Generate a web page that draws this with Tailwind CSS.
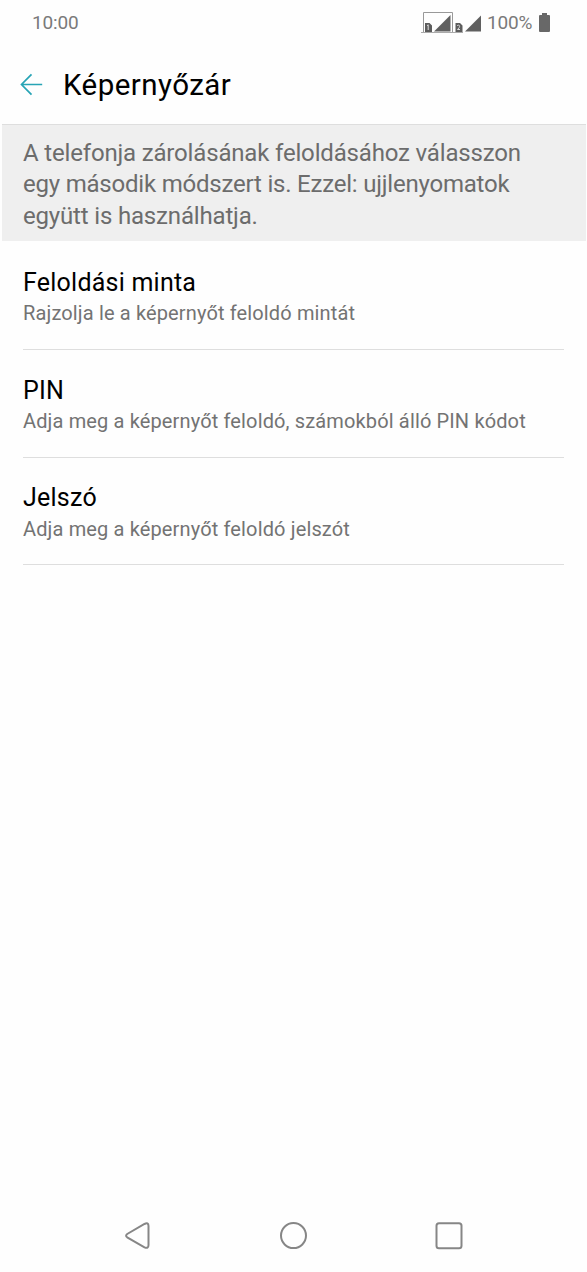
<!DOCTYPE html>
<html lang="hu">
<head>
<meta charset="utf-8">
<title>Képernyőzár</title>
<script src="https://cdn.jsdelivr.net/npm/@tailwindcss/browser@4"></script>
</head>
<body class="bg-[#fefefe] font-['Roboto',sans-serif] text-[#737373]">
<div class="flex h-[1272px] w-[587px] flex-col overflow-hidden">
  <header class="flex h-[45px] shrink-0 items-center justify-between pl-8 pr-[37px] text-[19px] leading-[22px] tracking-[-0.150px] text-[#7a7a7a]">
    <span class="whitespace-nowrap">10:00</span>
    <div class="flex items-center">
      <svg class="h-[24px] w-[60px]" viewBox="0 0 60 24" fill="none">
        <path d="M2.500 21.500V1.500H31.500V21.500" stroke="#999"/>
        <path d="M0 21.500H42" stroke="#aaa"/>
        <path d="M4 21V12H8.500L11 14.500V21ZM34.500 21V12H39L41.500 14.500V21Z" fill="#5c5c5c"/>
        <path d="M13 20.500L29.500 4V20.500ZM44 20.500L60.500 4V20.500Z" fill="#606060"/>
        <path d="M6 14.800L7.200 13.800V19M36 14.800C38 13.300 39.500 14.800 38 16.800L36.500 18.500H39" stroke="#ddd" stroke-width="1"/>
      </svg>
      <span class="ml-[6px] w-[45px] whitespace-nowrap">100%</span>
      <svg class="ml-[7px] h-[19px] w-[11px]" viewBox="0 0 11 19"><path d="M3 0h5v2h2q1 0 1 1v15q0 1-1 1H1q-1 0-1-1V3q0-1 1-1h2z" fill="#686868"/></svg>
    </div>
  </header>
  <div class="flex h-[79px] shrink-0 items-center pl-[20px]">
    <svg class="h-[24px] w-[23px]" viewBox="0 0 23 24" fill="none" stroke="#27a4b5" stroke-width="1.700"><path d="M22.200 11.500H1.500M11.500 1.300L1.500 11.500L11.500 21.700"/></svg>
    <h1 class="ml-5 whitespace-nowrap text-[29.500px] leading-[34px] tracking-[0.450px] text-black">Képernyőzár</h1>
  </div>
  <section class="ml-[2px] mr-px h-[117px] shrink-0 border-t border-[#dedede] bg-[#efefef] pl-[21px] pt-[13px] text-[24px] leading-[31.300px] tracking-[-0.170px] text-[#6c6c6c]">
    <p class="whitespace-nowrap">A telefonja zárolásának feloldásához válasszon<br><span class="tracking-[-0.210px]">egy második módszert is. Ezzel: ujjlenyomatok</span><br>együtt is használhatja.</p>
  </section>
  <main class="mx-[23px] flex-1">
    <div class="h-[109px] border-b border-[#dedede] pt-[27px]">
      <h2 class="whitespace-nowrap text-[25px] leading-[30px] tracking-[0.230px] text-black">Feloldási minta</h2>
      <p class="mt-[3px] whitespace-nowrap text-[20px] leading-[24px] tracking-[0.140px]">Rajzolja le a képernyőt feloldó mintát</p>
    </div>
    <div class="h-[108px] border-b border-[#dedede] pt-[26px]">
      <h2 class="whitespace-nowrap text-[25px] leading-[30px] tracking-[0.230px] text-black">PIN</h2>
      <p class="mt-[3px] whitespace-nowrap text-[20px] leading-[24px] tracking-[0.140px]">Adja meg a képernyőt feloldó, számokból álló PIN kódot</p>
    </div>
    <div class="h-[107px] border-b border-[#dedede] pt-[25px]">
      <h2 class="whitespace-nowrap text-[25px] leading-[30px] tracking-[0.230px] text-black">Jelszó</h2>
      <p class="mt-[4px] whitespace-nowrap text-[20px] leading-[24px] tracking-[0.140px]">Adja meg a képernyőt feloldó jelszót</p>
    </div>
  </main>
  <nav class="flex h-[72px] shrink-0 items-center justify-between pl-[124px] pr-[124px]">
    <svg class="h-[28px] w-[28px]" viewBox="0 0 28 28" fill="none" stroke="#868686" stroke-width="2"><path d="M3.200 12L20.500 2Q24.500 0 24.500 4V23Q24.500 27 20.500 25.300L3.200 15.300Q1 13.700 3.200 12Z"/></svg>
    <svg class="h-[28px] w-[28px]" viewBox="0 0 28 28" fill="none" stroke="#868686" stroke-width="2"><circle cx="13.500" cy="13.600" r="12.500"/></svg>
    <svg class="h-[28px] w-[28px]" viewBox="0 0 28 28" fill="none" stroke="#868686" stroke-width="2"><rect x="1.500" y="1.300" width="25" height="25" rx="2.500"/></svg>
  </nav>
</div>
</body>
</html>
